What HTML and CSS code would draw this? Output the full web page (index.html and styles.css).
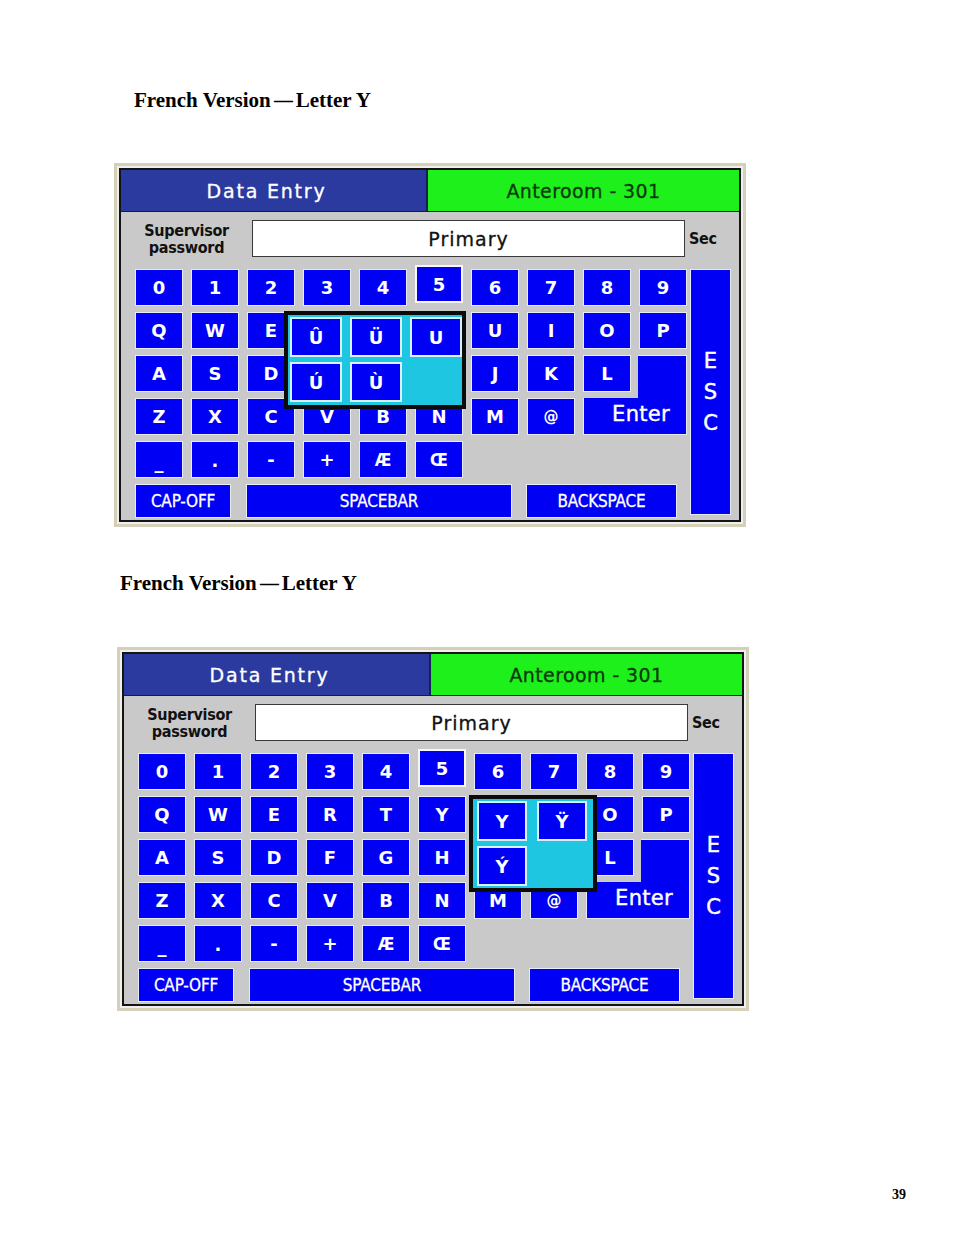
FILE: index.html
```html
<!DOCTYPE html>
<html lang="fr">
<head>
<meta charset="utf-8">
<title>French Version — Letter Y</title>
<link rel="stylesheet" href="styles.css">
</head>
<body>
<main class="page">
  <h2 class="caption c1">French Version<span class="dash">—</span>Letter Y</h2>

  <section class="panel p1">
    <div class="frame">
      <div class="titlebar">
        <div class="t-left">Data Entry</div>
        <div class="t-right">Anteroom - 301</div>
      </div>
      <div class="entry">
        <div class="label">Supervisor<br>password</div>
        <div class="input">Primary</div>
        <div class="sec">Sec</div>
      </div>
      <div class="kb">
        <div class="left">
          <div class="grid">
            <div class="key">0</div><div class="key">1</div><div class="key">2</div><div class="key">3</div><div class="key">4</div><div class="key up">5</div><div class="key">6</div><div class="key">7</div><div class="key">8</div><div class="key">9</div>
            <div class="key">Q</div><div class="key">W</div><div class="key">E</div><div class="key"></div><div class="key"></div><div class="key"></div><div class="key">U</div><div class="key">I</div><div class="key">O</div><div class="key">P</div>
            <div class="key">A</div><div class="key">S</div><div class="key">D</div><div class="key"></div><div class="key"></div><div class="key"></div><div class="key">J</div><div class="key">K</div>
            <div class="key lkey">L</div>
            <div class="key enter">Enter</div>
            <div class="key">Z</div><div class="key">X</div><div class="key">C</div><div class="key">V</div><div class="key">B</div><div class="key">N</div><div class="key">M</div><div class="key at">@</div>
            <div class="key under">_</div><div class="key dot">.</div><div class="key">-</div><div class="key">+</div><div class="key lig">Æ</div><div class="key lig">Œ</div>

            <div class="popup pop1">
              <div class="pkey">Û</div><div class="pkey">Ü</div><div class="pkey">U</div>
              <div class="pkey">Ú</div><div class="pkey">Ù</div>
            </div>
          </div>
          <div class="bottom">
            <div class="key wide cap">CAP-OFF</div>
            <div class="key wide space">SPACEBAR</div>
            <div class="key wide back">BACKSPACE</div>
          </div>
        </div>
        <div class="key esc"><span>E</span><span>S</span><span>C</span></div>
      </div>
    </div>
  </section>

  <h2 class="caption c2">French Version<span class="dash">—</span>Letter Y</h2>

  <section class="panel p2">
    <div class="frame">
      <div class="titlebar">
        <div class="t-left">Data Entry</div>
        <div class="t-right">Anteroom - 301</div>
      </div>
      <div class="entry">
        <div class="label">Supervisor<br>password</div>
        <div class="input">Primary</div>
        <div class="sec">Sec</div>
      </div>
      <div class="kb">
        <div class="left">
          <div class="grid">
            <div class="key">0</div><div class="key">1</div><div class="key">2</div><div class="key">3</div><div class="key">4</div><div class="key up">5</div><div class="key">6</div><div class="key">7</div><div class="key">8</div><div class="key">9</div>
            <div class="key">Q</div><div class="key">W</div><div class="key">E</div><div class="key">R</div><div class="key">T</div><div class="key">Y</div><div class="key"></div><div class="key"></div><div class="key">O</div><div class="key">P</div>
            <div class="key">A</div><div class="key">S</div><div class="key">D</div><div class="key">F</div><div class="key">G</div><div class="key">H</div><div class="key"></div><div class="key"></div>
            <div class="key lkey">L</div>
            <div class="key enter">Enter</div>
            <div class="key">Z</div><div class="key">X</div><div class="key">C</div><div class="key">V</div><div class="key">B</div><div class="key">N</div><div class="key">M</div><div class="key at">@</div>
            <div class="key under">_</div><div class="key dot">.</div><div class="key">-</div><div class="key">+</div><div class="key lig">Æ</div><div class="key lig">Œ</div>

            <div class="popup pop2">
              <div class="pkey">Y</div><div class="pkey">Ÿ</div>
              <div class="pkey">Ý</div>
            </div>
          </div>
          <div class="bottom">
            <div class="key wide cap">CAP-OFF</div>
            <div class="key wide space">SPACEBAR</div>
            <div class="key wide back">BACKSPACE</div>
          </div>
        </div>
        <div class="key esc"><span>E</span><span>S</span><span>C</span></div>
      </div>
    </div>
  </section>

  <div class="pagenum">39</div>
</main>
</body>
</html>
```

FILE: styles.css
```css
html, body {
  margin: 0;
  padding: 0;
  background: #ffffff;
}

body {
  font-family: "Liberation Serif", "Times New Roman", serif;
  color: #000;
}

.page {
  width: 954px;
  padding-top: 88px;
}

.caption {
  margin: 0;
  font-weight: bold;
  font-size: 21px;
  line-height: 24px;
  font-family: "Liberation Serif", "Times New Roman", serif;
  color: #000;
}

.dash {
  margin: 0 2px;
  display: inline-block;
  transform: scaleX(0.9);
}

.c1 {
  margin-left: 134px;
}

.c2 {
  margin-top: 44px;
  margin-left: 120px;
}

.panel {
  width: 632px;
  box-sizing: border-box;
  margin-top: 51px;
  margin-left: 114px;
  border: 3px solid #d4d0b8;
  padding: 2px;
  background: #efefef;
}

.p2 {
  margin-top: 52px;
  margin-left: 117px;
}

.frame {
  border: 2px solid #141414;
  background: #c9c9c9;
}

/* Title bar */
.titlebar {
  display: flex;
  height: 41px;
  border-bottom: 1px solid #1a1a3a;
  font-family: "DejaVu Sans", "Verdana", sans-serif;
  font-size: 19px;
}

.t-left {
  width: 307px;
  box-sizing: border-box;
  background: #2b3a9e;
  color: #ffffff;
  border-right: 2px solid #152055;
  display: flex;
  align-items: center;
  justify-content: center;
  letter-spacing: 1.8px;
  padding-right: 14px;
  -webkit-text-stroke: 0.3px #ffffff;
}

.t-right {
  flex: 1;
  background: #1ef01c;
  color: #0c3a0c;
  display: flex;
  align-items: center;
  justify-content: center;
  letter-spacing: 0.4px;
  -webkit-text-stroke: 0.3px #0c3a0c;
}

/* Entry row */
.entry {
  display: flex;
  align-items: center;
  height: 53px;
}

.label {
  width: 131px;
  text-align: center;
  font-family: "DejaVu Sans Condensed", "DejaVu Sans", sans-serif;
  font-stretch: condensed;
  font-weight: bold;
  font-size: 16px;
  line-height: 17px;
  color: #111;
  letter-spacing: -0.3px;
}

.input {
  width: 433px;
  height: 37px;
  box-sizing: border-box;
  background: #ffffff;
  border: 1px solid #3a3a3a;
  display: flex;
  align-items: center;
  justify-content: center;
  font-family: "DejaVu Sans", sans-serif;
  font-size: 19px;
  letter-spacing: 1px;
  color: #111;
  -webkit-text-stroke: 0.3px #111;
}

.sec {
  margin-left: 4px;
  font-family: "DejaVu Sans Condensed", "DejaVu Sans", sans-serif;
  font-stretch: condensed;
  font-weight: bold;
  font-size: 16px;
  color: #111;
  letter-spacing: -0.3px;
}

/* Keyboard */
.kb {
  display: flex;
  gap: 3px;
  padding: 4px 8px 2px 14px;
}

.left {
  width: 552px;
  display: flex;
  flex-direction: column;
  gap: 6px;
}

.grid {
  position: relative;
  display: grid;
  grid-template-columns: repeat(10, 48px);
  grid-template-rows: repeat(5, 37px);
  column-gap: 8px;
  row-gap: 6px;
}

.key {
  box-sizing: border-box;
  background: #0000f4;
  border: 1px solid #e9ecf6;
  color: #ffffff;
  display: flex;
  align-items: center;
  justify-content: center;
  font-family: "DejaVu Sans", sans-serif;
  font-weight: bold;
  font-size: 18px;
}

.key.up {
  align-self: start;
  height: 38px;
  margin-top: -4px;
  border: 2px solid #f7f7f7;
}

.key.lkey {
  grid-column: 9;
  grid-row: 3;
  z-index: 1;
  box-shadow: 7px 0 0 #c9c9c9, 0 6px 0 #c9c9c9, 7px 6px 0 #c9c9c9;
}

.key.enter {
  grid-column: 9 / 11;
  grid-row: 3 / 5;
  align-items: flex-end;
  padding: 0 0 8px 12px;
  font-weight: normal;
  font-size: 21px;
  letter-spacing: 0.3px;
  -webkit-text-stroke: 0.4px #ffffff;
}

.key.at {
  font-size: 15px;
}

.key.under {
  align-items: flex-end;
  padding-bottom: 4px;
}

.key.dot {
  align-items: flex-end;
  padding-bottom: 6px;
}

.key.lig {
  font-family: "DejaVu Sans Condensed", "DejaVu Sans", sans-serif;
  font-stretch: condensed;
  font-size: 17px;
}

.bottom {
  display: flex;
  height: 34px;
}

.key.wide {
  font-family: "DejaVu Sans Condensed", "DejaVu Sans", sans-serif;
  font-stretch: condensed;
  font-weight: normal;
  font-size: 17px;
  letter-spacing: -0.2px;
  -webkit-text-stroke: 0.3px #ffffff;
}

.cap {
  width: 96px;
}

.space {
  width: 266px;
  margin-left: 15px;
}

.back {
  width: 151px;
  margin-left: 14px;
}

.key.esc {
  width: 41px;
  margin-bottom: 3px;
  flex-direction: column;
  font-weight: normal;
  font-size: 21px;
  line-height: 31px;
  -webkit-text-stroke: 0.5px #ffffff;
}

/* Accent popup */
.popup {
  position: absolute;
  z-index: 5;
  top: 42px;
  box-sizing: border-box;
  background: #1ec6e2;
  border: 4px solid #0b0b0b;
  display: grid;
  grid-template-rows: 40px 40px;
  row-gap: 5px;
  padding: 2px;
}

.pop1 {
  left: 149px;
  width: 182px;
  height: 98px;
  grid-template-columns: repeat(3, 52px);
  column-gap: 8px;
}

.pop2 {
  left: 331px;
  width: 128px;
  height: 97px;
  padding: 2px 4px;
  grid-template-columns: repeat(2, 50px);
  column-gap: 10px;
}

.pkey {
  box-sizing: border-box;
  background: #0000f4;
  border: 2px solid #d9f2ff;
  color: #ffffff;
  display: flex;
  align-items: center;
  justify-content: center;
  font-family: "DejaVu Sans", sans-serif;
  font-weight: bold;
  font-size: 18px;
}

.pagenum {
  margin-top: 176px;
  padding-right: 48px;
  text-align: right;
  font-family: "Liberation Serif", "Times New Roman", serif;
  font-weight: bold;
  font-size: 14px;
  line-height: 16px;
}
```
